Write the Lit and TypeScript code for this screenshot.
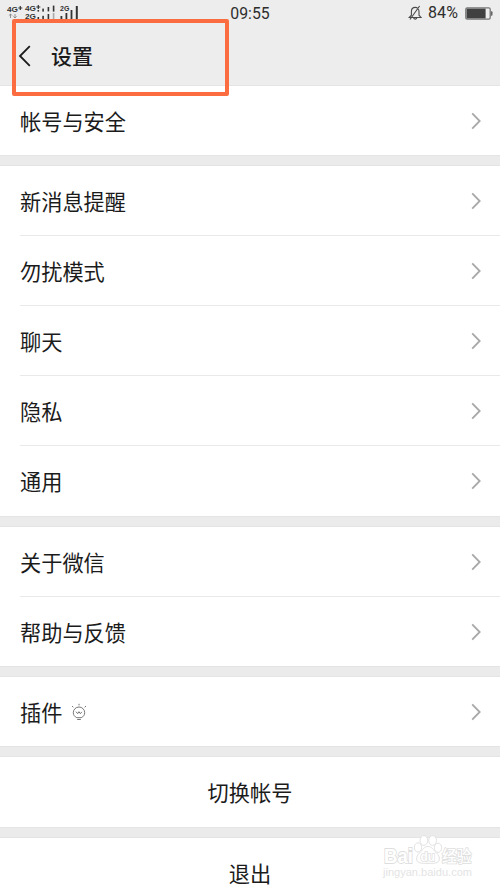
import { LitElement, html, css, svg, nothing } from "lit";
import { customElement } from "lit/decorators.js";

const FONT = css`"Noto Sans CJK SC", sans-serif`;

@customElement("signal-icons")
class SignalIcons extends LitElement {
  static styles = css`
    :host { display: block; width: 76px; height: 21px; }
    svg { display: block; }
    text { font-family: "Liberation Sans", Arial, sans-serif; font-weight: 700; fill: #333; }
  `;
  render() {
    const bar = (x: number, y: number, h: number, c = "#333", w = 1.6) =>
      svg`<rect x=${x} y=${y} width=${w} height=${h} fill=${c} />`;
    return html`<svg width="76" height="21" viewBox="6 0 76 21">
      <text x="7" y="12" font-size="8" textLength="11" lengthAdjust="spacingAndGlyphs">4G</text>
      <path d="M18.3 8h4M20.3 6v4" stroke="#333" stroke-width="1.2"/>
      <path d="M10.5 18v-4M8.9 15.6l1.6-1.6 1.6 1.6M15 14v4M13.4 16.4l1.6 1.6 1.6-1.6" fill="none" stroke="#888" stroke-width=".9"/>
      <text x="25" y="11.4" font-size="7" textLength="11" lengthAdjust="spacingAndGlyphs">4G</text>
      <path d="M36.3 7h4M38.3 5v4" stroke="#333" stroke-width="1.2"/>
      <text x="25" y="19.2" font-size="7" textLength="11" lengthAdjust="spacingAndGlyphs">2G</text>
      ${bar(37.5, 10, 1.6)}${bar(42.3, 8.6, 3)}${bar(47.6, 7, 4.4)}${bar(52.8, 5.6, 6)}
      ${bar(37.5, 17, 2)}${bar(42.3, 15.8, 3.2)}${bar(47.6, 14, 5)}${bar(52.8, 13, 6, "#aaa")}
      <text x="60" y="10.6" font-size="6.6" textLength="9.3" lengthAdjust="spacingAndGlyphs">2G</text>
      ${bar(60.5, 16, 3, "#333", 1.8)}${bar(65.5, 13, 6, "#333", 1.8)}${bar(70.6, 10, 9, "#333", 1.8)}${bar(75.8, 6, 13, "#333", 2)}
    </svg>`;
  }
}

@customElement("status-bar")
class StatusBar extends LitElement {
  static styles = css`
    :host { display: grid; grid-template-columns: 1fr auto 1fr; height: 27px; padding: 0 6px; color: #2e2e2e; }
    .time, .percent { font: 16px/27px Roboto, sans-serif; }
    .time { font-size: 15.8px; line-height: 28px; }
    .right { display: flex; justify-content: flex-end; align-items: center; height: 26px; padding-right: 1px; }
    .bell { margin-right: 6px; }
    .percent { line-height: 26px; margin-right: 7px; letter-spacing: .1px; }
    svg { display: block; }
  `;
  render() {
    return html`
      <signal-icons></signal-icons>
      <span class="time">09:55</span>
      <div class="right">
        <svg class="bell" width="14" height="16" viewBox="0 0 14 16" fill="none" stroke="#4a4a4a" stroke-width="1.1">
          <path d="M1.2 12.5h11.9L11 10.2V6.5C11 4 9.3 2.4 7.2 2.4S3.4 4 3.4 6.5v3.7zM5.6 13a1.7 1.7 0 0 0 3.2 0M11.6 1L2 14.5"/>
        </svg>
        <span class="percent">84%</span>
        <svg width="28" height="13" viewBox="0 0 28 13">
          <rect x=".8" y=".8" width="24.4" height="11.4" rx="1.4" fill="#eee" stroke="#777" stroke-width="1.3"/>
          <rect x="1.6" y="1.6" width="19" height="9.8" fill="#414141"/>
          <path d="M25.8 4.2h.7q1 0 1 1v2.6q0 1-1 1h-.7z" fill="#666"/>
        </svg>
      </div>`;
  }
}

@customElement("settings-row")
class SettingsRow extends LitElement {
  static properties = { label: {}, bulb: { type: Boolean } };
  declare label: string;
  declare bulb: boolean;
  static styles = css`
    :host { display: flex; align-items: center; height: 70px; padding: 0 19px 1px 20px; box-sizing: border-box; }
    .label { font: 21.2px/32px ${FONT}; color: #1b1b1b; white-space: nowrap; }
    .bulb { margin-left: 9px; }
    .arrow { margin-left: auto; }
    svg { display: block; }
  `;
  render() {
    return html`
      <span class="label">${this.label}</span>
      ${this.bulb
        ? html`<svg class="bulb" width="16" height="18" viewBox="0 0 16 18" fill="none" stroke="#777" stroke-width="1">
            <path d="M5.8 14.7C3.6 13.7 2.3 11.9 2.3 9.7a5.7 5.7 0 0 1 11.4 0c0 2.2-1.3 4-3.5 5zM6.2 16.5h3.6"/>
            <path d="M5 8.7l1.7 2 1.2-2 1.5 2 1.4-1.8"/>
            <path d="M8 .8v1.600M1 3l1.3 1.3M15 3l-1.3 1.3"/>
          </svg>`
        : nothing}
      <svg class="arrow" width="10" height="18" viewBox="0 0 10 18" fill="none" stroke="#a8a8a8" stroke-width="1.8">
        <path d="M1.2 1.3L8.7 9l-7.5 7.7"/>
      </svg>`;
  }
}

interface Group { rows: { label: string; bulb?: boolean }[]; action?: boolean; size: string }

const GROUPS: Group[] = [
  { rows: [{ label: "帐号与安全" }], size: "short" },
  { rows: ["新消息提醒", "勿扰模式", "聊天", "隐私", "通用"].map((label) => ({ label })), size: "" },
  { rows: [{ label: "关于微信" }, { label: "帮助与反馈" }], size: "short" },
  { rows: [{ label: "插件", bulb: true }], size: "short" },
  { rows: [{ label: "切换帐号" }], action: true, size: "" },
  { rows: [{ label: "退出" }], action: true, size: "" },
];

@customElement("app-root")
class AppRoot extends LitElement {
  static styles = css`
    :host { display: block; position: relative; height: 889px; overflow: hidden; background: #ebebeb; }
    .header { height: 86px; box-sizing: border-box; border-bottom: 1px solid #d9d9d9; background: #ededed; }
    .nav { display: flex; align-items: center; height: 57px; padding-left: 18px; }
    .title { margin-left: 19px; padding-bottom: 1px; font: 500 21px/32px ${FONT}; color: #1b1b1b; }
    .groups { display: flex; flex-direction: column; gap: 11px; }
    .group { background: #fff; box-shadow: 0 0 0 1px #e4e4e4; }
    .short settings-row:last-child { height: 69px; padding-bottom: 0; }
    .divider { height: 1px; margin: -1px 0 0 20px; background: #e9e9e9; }
    .action { height: 70px; font: 21.2px/70px ${FONT}; text-align: center; color: #1b1b1b; }
    .highlight { position: absolute; left: 12px; top: 19px; width: 217px; height: 77px; box-sizing: border-box; border: 4px solid #fb6d40; border-radius: 2px; }
    .watermark { position: absolute; left: 382px; top: 834px; }
    .watermark text { font-family: "Liberation Sans", "Noto Sans CJK SC", sans-serif; paint-order: stroke; }
    svg { display: block; }
  `;
  render() {
    return html`
      <header class="header">
        <status-bar></status-bar>
        <div class="nav">
          <svg width="14" height="22" viewBox="0 0 14 22" fill="none" stroke="#1b1b1b" stroke-width="1.8">
            <path d="M11.8 1.2L2 11l9.8 9.8"/>
          </svg>
          <span class="title">设置</span>
        </div>
      </header>
      <main class="groups">
        ${GROUPS.map((g) => html`<section class="group ${g.size}">
          ${g.rows.map((r, i) => html`
            ${i ? html`<div class="divider"></div>` : nothing}
            ${g.action
              ? html`<div class="action">${r.label}</div>`
              : html`<settings-row .label=${r.label} .bulb=${!!r.bulb}></settings-row>`}`)}
        </section>`)}
      </main>
      <div class="highlight"></div>
      <svg class="watermark" width="96" height="48" viewBox="0 0 96 48" fill="#fff" stroke="#dedede" stroke-width=".9">
        <text x="2" y="29" font-size="21" font-weight="700" textLength="29" lengthAdjust="spacingAndGlyphs" stroke-width="1.8">Bai</text>
        <ellipse cx="36" cy="13.5" rx="3.7" ry="4.6"/>
        <ellipse cx="41.9" cy="6.5" rx="3.9" ry="4.9"/>
        <ellipse cx="50.6" cy="6.5" rx="3.9" ry="4.9"/>
        <ellipse cx="56" cy="13.8" rx="3.7" ry="4.6"/>
        <path d="M46 12.5c4 0 5.5 3.5 8 6s4 4.500 3.2 7.500-4.500 3.700-11.200 3.300c-6.700.4-10.400-.3-11.200-3.300s.7-5 3.200-7.500 4-6 8-6z"/>
        <text x="38.5" y="27.3" font-size="13" font-weight="700" textLength="14.5" lengthAdjust="spacingAndGlyphs" stroke-width="1.500">du</text>
        <text x="60" y="28" font-size="15.5" font-weight="500" textLength="29.5" lengthAdjust="spacingAndGlyphs" stroke-width="1.6">经验</text>
        <text x="1" y="41.5" font-size="11" textLength="89" fill="#e4e4e4" stroke="none">jingyan.baidu.com</text>
      </svg>`;
  }
}
